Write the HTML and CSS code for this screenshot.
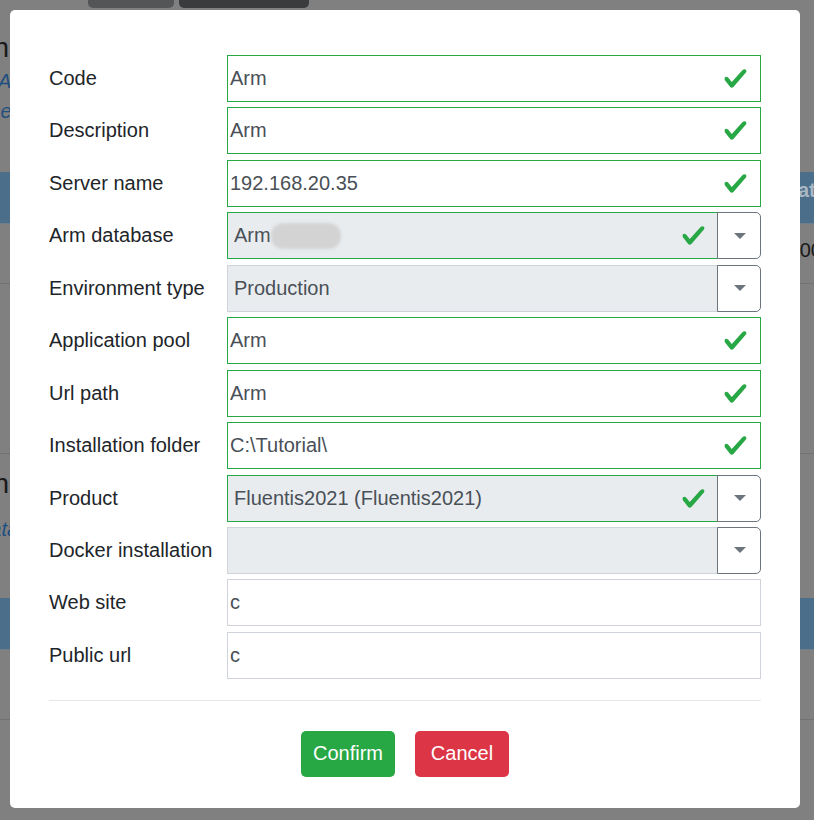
FILE: index.html
```html
<!DOCTYPE html>
<html>
<head>
<meta charset="utf-8">
<link rel="stylesheet" href="styles.css">
</head>
<body>
<div class="page">
  <div class="bg-top">
    <span class="bg-btn bg-btn-a"></span>
    <span class="bg-btn bg-btn-b"></span>
  </div>
  <div class="bg-title"><span>Configuration</span></div>
  <div class="bg-link bg-link-1">Arm</div>
  <div class="bg-link bg-link-2">Base</div>
  <div class="bg-band bg-band-1"><span class="bg-band-text">Stato</span></div>
  <div class="bg-row bg-row-1"><span class="bg-cell">2000</span></div>
  <div class="bg-row bg-row-2"></div>
  <div class="bg-title bg-title-2"><span>Installation</span></div>
  <div class="bg-link bg-link-3">Add data</div>
  <div class="bg-band bg-band-2"></div>
  <div class="bg-row bg-row-3"></div>
</div>

<div class="modal">
  <div class="form">
    <label class="lbl">Code</label>
    <div class="field valid"><span class="val">Arm</span><svg class="chk" viewBox="0 0 8 8"><path d="M2.3 6.73L.6 4.53c-.4-1.04.46-1.4 1.1-.8l1.1 1.4 3.4-3.8c.6-.63 1.6-.27 1.2.7l-4 4.6c-.43.5-.8.4-1.1.1z"/></svg></div>

    <label class="lbl">Description</label>
    <div class="field valid"><span class="val">Arm</span><svg class="chk" viewBox="0 0 8 8"><path d="M2.3 6.73L.6 4.53c-.4-1.04.46-1.4 1.1-.8l1.1 1.4 3.4-3.8c.6-.63 1.6-.27 1.2.7l-4 4.6c-.43.5-.8.4-1.1.1z"/></svg></div>

    <label class="lbl">Server name</label>
    <div class="field valid"><span class="val">192.168.20.35</span><svg class="chk" viewBox="0 0 8 8"><path d="M2.3 6.73L.6 4.53c-.4-1.04.46-1.4 1.1-.8l1.1 1.4 3.4-3.8c.6-.63 1.6-.27 1.2.7l-4 4.6c-.43.5-.8.4-1.1.1z"/></svg></div>

    <label class="lbl">Arm database</label>
    <div class="sel">
      <div class="sel-main valid"><span class="val">Arm</span><span class="blur"></span><svg class="chk" viewBox="0 0 8 8"><path d="M2.3 6.73L.6 4.53c-.4-1.04.46-1.4 1.1-.8l1.1 1.4 3.4-3.8c.6-.63 1.6-.27 1.2.7l-4 4.6c-.43.5-.8.4-1.1.1z"/></svg></div>
      <div class="sel-btn"><span class="caret"></span></div>
    </div>

    <label class="lbl">Environment type</label>
    <div class="sel">
      <div class="sel-main"><span class="val">Production</span></div>
      <div class="sel-btn"><span class="caret"></span></div>
    </div>

    <label class="lbl">Application pool</label>
    <div class="field valid"><span class="val">Arm</span><svg class="chk" viewBox="0 0 8 8"><path d="M2.3 6.73L.6 4.53c-.4-1.04.46-1.4 1.1-.8l1.1 1.4 3.4-3.8c.6-.63 1.6-.27 1.2.7l-4 4.6c-.43.5-.8.4-1.1.1z"/></svg></div>

    <label class="lbl">Url path</label>
    <div class="field valid"><span class="val">Arm</span><svg class="chk" viewBox="0 0 8 8"><path d="M2.3 6.73L.6 4.53c-.4-1.04.46-1.4 1.1-.8l1.1 1.4 3.4-3.8c.6-.63 1.6-.27 1.2.7l-4 4.6c-.43.5-.8.4-1.1.1z"/></svg></div>

    <label class="lbl">Installation folder</label>
    <div class="field valid"><span class="val">C:\Tutorial\</span><svg class="chk" viewBox="0 0 8 8"><path d="M2.3 6.73L.6 4.53c-.4-1.04.46-1.4 1.1-.8l1.1 1.4 3.4-3.8c.6-.63 1.6-.27 1.2.7l-4 4.6c-.43.5-.8.4-1.1.1z"/></svg></div>

    <label class="lbl">Product</label>
    <div class="sel">
      <div class="sel-main valid"><span class="val">Fluentis2021 (Fluentis2021)</span><svg class="chk" viewBox="0 0 8 8"><path d="M2.3 6.73L.6 4.53c-.4-1.04.46-1.4 1.1-.8l1.1 1.4 3.4-3.8c.6-.63 1.6-.27 1.2.7l-4 4.6c-.43.5-.8.4-1.1.1z"/></svg></div>
      <div class="sel-btn"><span class="caret"></span></div>
    </div>

    <label class="lbl">Docker installation</label>
    <div class="sel">
      <div class="sel-main"><span class="val"></span></div>
      <div class="sel-btn"><span class="caret"></span></div>
    </div>

    <label class="lbl">Web site</label>
    <div class="field"><span class="val">c</span></div>

    <label class="lbl">Public url</label>
    <div class="field"><span class="val">c</span></div>
  </div>

  <div class="sep"></div>

  <div class="actions">
    <button class="btn btn-ok">Confirm</button>
    <button class="btn btn-cancel">Cancel</button>
  </div>
</div>
</body>
</html>
```

FILE: styles.css
```css
* { box-sizing: border-box; }

html, body {
  margin: 0;
  padding: 0;
}

body {
  background: #808080;
  font-family: "Liberation Sans", Arial, sans-serif;
  font-size: 20px;
  width: 814px;
  height: 820px;
  overflow: hidden;
  position: relative;
}

/* ---------- dimmed page behind the modal ---------- */
.page {
  display: flex;
  flex-direction: column;
  width: 814px;
}

.bg-top {
  height: 8px;
  display: flex;
  gap: 5px;
  padding-left: 88px;
}
.bg-btn {
  height: 8px;
  border-radius: 0 0 5px 5px;
}
.bg-btn-a { width: 86px; background: #545556; }
.bg-btn-b { width: 130px; background: #3a3b3d; }

.bg-title {
  width: 9px;
  height: 58px;
  padding-top: 24px;
  font-size: 28px;
  line-height: 32px;
  color: #1a1a1a;
  display: flex;
  justify-content: flex-end;
  align-items: flex-start;
  white-space: nowrap;
}
.bg-title span { flex: none; }
.bg-title-2 {
  height: 60px;
  padding-top: 14px;
}

.bg-link {
  height: 30px;
  color: #1f4f7f;
  font-style: italic;
  white-space: nowrap;
  line-height: 30px;
}
.bg-link-1 { margin-left: -2px; }
.bg-link-2 { margin-left: -34px; height: 76px; }
.bg-link-3 { margin-left: -62px; height: 84px; }

.bg-band {
  background: #4b6f8b;
  border-bottom: 1px solid #6d7e8c;
}
.bg-band-1 {
  height: 52px;
  display: flex;
  justify-content: flex-end;
  align-items: center;
  overflow: hidden;
  padding-bottom: 14px;
}
.bg-band-text {
  color: #a9b7c2;
  font-weight: bold;
  white-space: nowrap;
  margin-right: -14px;
}
.bg-band-2 { height: 52px; }

.bg-row {
  border-bottom: 1px solid #727272;
}
.bg-row-1 {
  height: 60px;
  display: flex;
  justify-content: flex-end;
  align-items: center;
  overflow: hidden;
  padding-bottom: 6px;
}
.bg-cell {
  color: #1a1a1a;
  white-space: nowrap;
  margin-right: -8px;
}
.bg-row-2 { height: 170px; }
.bg-row-3 { height: 70px; }

/* ---------- modal ---------- */
.modal {
  position: absolute;
  top: 10px;
  left: 10px;
  width: 790px;
  height: 798px;
  background: #fff;
  border-radius: 5px;
  padding: 45px 39px 31px;
  display: flex;
  flex-direction: column;
}

.form {
  display: grid;
  grid-template-columns: 178px 534px;
  grid-auto-rows: 47px;
  row-gap: 5.45px;
  align-items: center;
}

.lbl {
  color: #212529;
  font-size: 20px;
}

.field {
  height: 47px;
  border: 1px solid #ced4da;
  display: flex;
  align-items: center;
  padding-left: 2px;
  padding-right: 12px;
  background: #fff;
}
.field.valid { border-color: #28a745; }

.val {
  color: #495057;
  font-size: 20px;
  white-space: nowrap;
}

.chk {
  width: 25px;
  height: 25px;
  margin-left: auto;
  fill: #28a745;
  flex: none;
}

.sel {
  height: 47px;
  display: flex;
}
.sel-main {
  flex: 1;
  height: 47px;
  border: 1px solid #ced4da;
  background: #e9ecef;
  display: flex;
  align-items: center;
  padding-left: 6px;
  padding-right: 11px;
}
.sel-main.valid { border-color: #28a745; }

.blur {
  width: 70px;
  height: 26px;
  background: #d3d3d3;
  border-radius: 12px;
  filter: blur(1.5px);
}

.sel-btn {
  width: 44px;
  height: 47px;
  border: 1px solid #6c757d;
  border-radius: 0 5px 5px 0;
  background: #fff;
  margin-left: -1px;
  display: flex;
  align-items: center;
  justify-content: center;
}
.caret {
  width: 0;
  height: 0;
  border-left: 6px solid transparent;
  border-right: 6px solid transparent;
  border-top: 6px solid #6c757d;
  margin-left: 1px;
}

.sep {
  height: 1px;
  background: #e5e7ea;
  margin-top: 21px;
}

.actions {
  display: flex;
  justify-content: center;
  gap: 20px;
  margin-top: 30px;
}

.btn {
  font-family: "Liberation Sans", Arial, sans-serif;
  font-size: 20px;
  color: #fff;
  border: none;
  border-radius: 5px;
  height: 46px;
  min-width: 94px;
  padding: 0 12px;
  text-align: center;
}
.btn-ok { background: #28a745; }
.btn-cancel { background: #dc3545; }
```
